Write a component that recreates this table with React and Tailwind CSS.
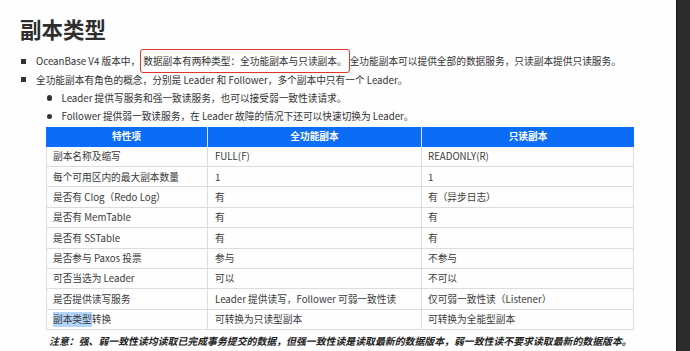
import React from "react";

const rows = [
  ["副本名称及缩写", "FULL(F)", "READONLY(R)"],
  ["每个可用区内的最大副本数量", "1", "1"],
  ["是否有 Clog（Redo Log）", "有", "有（异步日志）"],
  ["是否有 MemTable", "有", "有"],
  ["是否有 SSTable", "有", "有"],
  ["是否参与 Paxos 投票", "参与", "不参与"],
  ["可否当选为 Leader", "可以", "不可以"],
  ["是否提供读写服务", "Leader 提供读写，Follower 可弱一致性读", "仅可弱一致性读（Listener）"],
  ["__hl__", "可转换为只读型副本", "可转换为全能型副本"],
];

export default function App() {
  return (
    <div
      className="w-[690px] h-[351px] overflow-hidden flex bg-white text-[#333]"
      style={{ fontFamily: '"Noto Sans CJK SC", "Noto Sans", sans-serif' }}
    >
      <div className="w-[676px] h-full bg-[#fefefe] pl-[20px] pt-[13px]">
        <div className="h-[32px] leading-[32px] text-[21.5px] font-bold text-[#2e2e2e]">副本类型</div>
        <div className="mt-[7.5px] text-[9.7px]">
          <div className="h-[18.3px] flex items-center">
            <span className="w-[5px] h-[5px] bg-[#333] ml-[1px]" />
            <span className="ml-[10px] whitespace-nowrap">
              OceanBase V4 版本中，
              <span className="border-[1.5px] border-[#e0362c] rounded-[3px] px-[2px] py-[4px]">数据副本有两种类型：全功能副本与只读副本。</span>
              全功能副本可以提供全部的数据服务，只读副本提供只读服务。
            </span>
          </div>
          <div className="h-[18.3px] flex items-center">
            <span className="w-[5px] h-[5px] bg-[#333] ml-[1px]" />
            <span className="ml-[10px] whitespace-nowrap">全功能副本有角色的概念，分别是 Leader 和 Follower，多个副本中只有一个 Leader。</span>
          </div>
          <div className="h-[18.3px] flex items-center pl-[26.5px]">
            <span className="w-[5.5px] h-[5.5px] rounded-full bg-[#333]" />
            <span className="ml-[9.5px] whitespace-nowrap">Leader 提供写服务和强一致读服务，也可以接受弱一致性读请求。</span>
          </div>
          <div className="h-[18.3px] flex items-center pl-[26.5px]">
            <span className="w-[5.5px] h-[5.5px] rounded-full bg-[#333]" />
            <span className="ml-[9.5px] whitespace-nowrap">Follower 提供弱一致读服务，在 Leader 故障的情况下还可以快速切换为 Leader。</span>
          </div>
        </div>

        <div className="ml-[26px] mt-[1px] w-[588px] text-[9.7px] text-[#3a3a3a]">
          <div className="grid grid-cols-[162px_214px_212px] h-[20px] bg-[#0b6cf6] text-white font-bold">
            <div className="flex items-center justify-center border-r border-[#dfe6f0]">特性项</div>
            <div className="flex items-center justify-center border-r border-[#dfe6f0]">全功能副本</div>
            <div className="flex items-center justify-center">只读副本</div>
          </div>
          <div className="border-l border-r border-[#dcdcdc]">
            {rows.map((r, i) => (
              <div key={i} className="grid grid-cols-[161px_214px_211px] h-[20.4px] border-b border-[#dcdcdc]">
                <div className="flex items-center pl-[6px] border-r border-[#dcdcdc] whitespace-nowrap">
                  {r[0] === "__hl__" ? (
                    <>
                      <span className="bg-[#b3d4fb]">副本类型</span>转换
                    </>
                  ) : (
                    r[0]
                  )}
                </div>
                <div className="flex items-center pl-[7px] border-r border-[#dcdcdc] whitespace-nowrap">{r[1]}</div>
                <div className="flex items-center pl-[6px] whitespace-nowrap">{r[2]}</div>
              </div>
            ))}
          </div>
        </div>

        <div className="ml-[29px] mt-[2px] h-[18px] leading-[18px] text-[9.9px] font-bold italic text-[#222] whitespace-nowrap">
          注意：强、弱一致性读均读取已完成事务提交的数据，但强一致性读是读取最新的数据版本，弱一致性读不要求读取最新的数据版本。
        </div>
      </div>
      <div className="w-[1px] h-full bg-[#161616]" />
      <div className="flex-1 h-full bg-[#2c2c2c]" />
    </div>
  );
}
